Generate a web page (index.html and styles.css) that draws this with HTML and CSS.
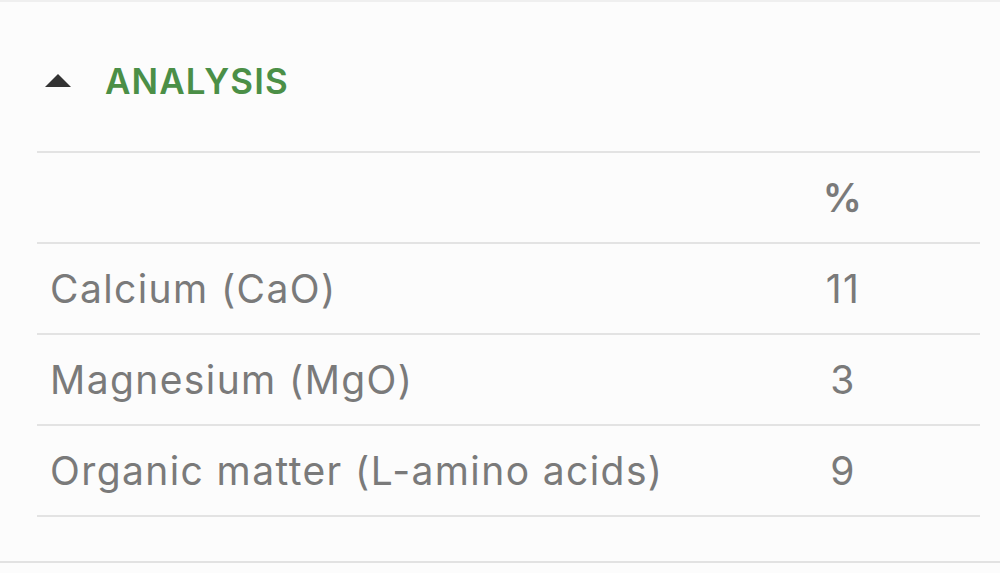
FILE: index.html
```html
<!DOCTYPE html>
<html>
<head>
<meta charset="utf-8">
<link rel="stylesheet" href="styles.css">
</head>
<body>
<div class="panel">
  <div class="section-head">
    <svg class="caret" width="26" height="13" viewBox="0 0 26 13"><path d="M0 13 L13 0 L26 13 Z" fill="#333"/></svg>
    <span class="title">ANALYSIS</span>
  </div>
  <div class="table">
    <div class="row head"><div class="name"></div><div class="val">%</div></div>
    <div class="row"><div class="name">Calcium (CaO)</div><div class="val">11</div></div>
    <div class="row"><div class="name">Magnesium (MgO)</div><div class="val">3</div></div>
    <div class="row"><div class="name">Organic matter (L-amino acids)</div><div class="val">9</div></div>
  </div>
</div>
</body>
</html>
```
FILE: styles.css
```css
html, body {
  margin: 0;
  padding: 0;
  background: #fcfcfc;
}
body {
  font-family: Inter, Roboto, "Liberation Sans", sans-serif;
  width: 1000px;
  height: 573px;
  overflow: hidden;
}
.panel {
  border-top: 2px solid #efefef;
  border-bottom: 2px solid #e2e2e2;
  height: 563px;
  box-sizing: border-box;
  padding: 0 20px 0 37px;
}
.section-head {
  height: 149px;
  display: flex;
  align-items: center;
  padding-left: 8px;
  padding-top: 8px;
  box-sizing: border-box;
}
.caret {
  display: block;
  margin-right: 34px;
}
.title {
  color: #4b8f47;
  font-weight: 600;
  font-size: 35px;
  letter-spacing: 1.1px;
}
.table {
  border-top: 2px solid #e3e3e3;
}
.row {
  display: flex;
  align-items: center;
  height: 91px;
  border-bottom: 2px solid #e3e3e3;
  box-sizing: border-box;
  color: #7a7a7a;
  font-size: 39px;
  letter-spacing: 1.4px;
}
.name {
  flex: 1;
  padding-left: 13px;
}
.val {
  width: 274px;
  text-align: center;
}
.head .val {
  font-weight: 600;
}
```
